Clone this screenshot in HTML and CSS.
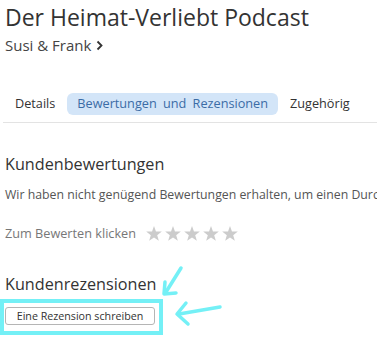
FILE: index.html
```html
<!DOCTYPE html>
<html lang="de">
<head>
    <meta charset="UTF-8">
    <meta name="viewport" content="width=device-width, initial-scale=1.0">
    <title>Der Heimat-Verliebt Podcast</title>
    <link rel="stylesheet" href="styles.css">
</head>
<body>

<div class="page">
    <h1 class="title">Der Heimat-Verliebt Podcast</h1>
    <a class="artist" href="#">Susi &amp; Frank
        <svg class="chevron" width="7" height="11" viewBox="0 0 7 11"><path d="M1.5 1.5 L5.5 5.5 L1.5 9.5" fill="none" stroke="#333" stroke-width="1.8"/></svg>
    </a>

    <div class="tabs">
        <span class="tab">Details</span>
        <span class="tab active">Bewertungen und Rezensionen</span>
        <span class="tab">Zugehörig</span>
    </div>

    <div class="section ratings">
        <h2>Kundenbewertungen</h2>
        <p class="note">Wir haben nicht genügend Bewertungen erhalten, um einen Durchschnitt anzuzeigen.</p>
        <div class="rate">
            <span>Zum Bewerten klicken</span>
            <span class="stars">
                <svg width="16" height="15" viewBox="0 0 24 23"><path d="M12 0 L15 8.3 L24 8.6 L16.9 14.1 L19.4 22.8 L12 17.8 L4.6 22.8 L7.1 14.1 L0 8.6 L9 8.3 Z"/></svg>
                <svg width="16" height="15" viewBox="0 0 24 23"><path d="M12 0 L15 8.3 L24 8.6 L16.9 14.1 L19.4 22.8 L12 17.8 L4.6 22.8 L7.1 14.1 L0 8.6 L9 8.3 Z"/></svg>
                <svg width="16" height="15" viewBox="0 0 24 23"><path d="M12 0 L15 8.3 L24 8.6 L16.9 14.1 L19.4 22.8 L12 17.8 L4.6 22.8 L7.1 14.1 L0 8.6 L9 8.3 Z"/></svg>
                <svg width="16" height="15" viewBox="0 0 24 23"><path d="M12 0 L15 8.3 L24 8.6 L16.9 14.1 L19.4 22.8 L12 17.8 L4.6 22.8 L7.1 14.1 L0 8.6 L9 8.3 Z"/></svg>
                <svg width="16" height="15" viewBox="0 0 24 23"><path d="M12 0 L15 8.3 L24 8.6 L16.9 14.1 L19.4 22.8 L12 17.8 L4.6 22.8 L7.1 14.1 L0 8.6 L9 8.3 Z"/></svg>
            </span>
        </div>
    </div>

    <div class="section reviews">
        <h2>Kundenrezensionen</h2>
        <div class="highlight">
            <button>Eine Rezension schreiben</button>
        </div>
    </div>
</div>

<svg class="marks" width="377" height="341" viewBox="0 0 377 341">
    <g fill="none" stroke="#74f0f6" stroke-width="3.5" stroke-linecap="round" stroke-linejoin="round">
        <path d="M181 268 L166 292"/>
        <path d="M165 282 L164 294 L176 293"/>
        <path d="M220 307 L179 314"/>
        <path d="M186 303 L177 314 L188 324"/>
    </g>
</svg>

</body>
</html>
```

FILE: styles.css
```css
body {
    margin: 0;
    font-family: "Open Sans", "Noto Sans", sans-serif;
    background-color: #ffffff;
    color: #333333;
    overflow: hidden;
}
.page {
    position: relative;
    width: 377px;
    overflow: hidden;
}
.title {
    margin: 0;
    padding: 0 0 0 5px;
    font-size: 23px;
    font-weight: normal;
    line-height: 34px;
    color: #333333;
    white-space: nowrap;
}
.artist {
    display: inline-flex;
    align-items: center;
    gap: 5px;
    margin-left: 5px;
    font-size: 15px;
    line-height: 22px;
    color: #444444;
    text-decoration: none;
}
.tabs {
    display: flex;
    align-items: center;
    gap: 2px;
    margin: 37px 0 0 3px;
    padding: 0 0 7px 2px;
    border-bottom: 1px solid #e3e3e3;
}
.tab {
    padding: 2px 10px 3px;
    font-size: 12.7px;
    line-height: 17px;
    color: #333333;
    border-radius: 6px;
}
.tab.active {
    background-color: #d3e5f8;
    color: #3b6ca6;
    word-spacing: 3px;
}
.section {
    padding-left: 5px;
}
.section h2 {
    margin: 0;
    font-size: 16.2px;
    font-weight: normal;
    line-height: 24px;
    color: #333333;
}
.ratings {
    padding-top: 29px;
}
.note {
    margin: 10px 0 0;
    font-size: 12.3px;
    line-height: 17px;
    color: #555555;
    white-space: nowrap;
}
.rate {
    display: flex;
    align-items: center;
    gap: 10px;
    margin-top: 20px;
    font-size: 12.7px;
    line-height: 20px;
    color: #777777;
}
.stars {
    display: flex;
    gap: 3px;
    fill: #cccccc;
}
.reviews {
    padding-top: 29px;
}
.highlight {
    display: inline-block;
    margin: 3px 0 0 -5px;
    padding: 4px 4px 6px 1px;
    border: 4px solid #74f0f6;
}
button {
    display: block;
    width: 150px;
    height: 18px;
    padding: 0;
    font-family: "Open Sans", "Noto Sans", sans-serif;
    font-size: 10.7px;
    color: #333333;
    background-color: #ffffff;
    border: 1px solid #b5b5b5;
    border-radius: 3px;
}
.marks {
    position: absolute;
    top: 0;
    left: 0;
    pointer-events: none;
}
```
